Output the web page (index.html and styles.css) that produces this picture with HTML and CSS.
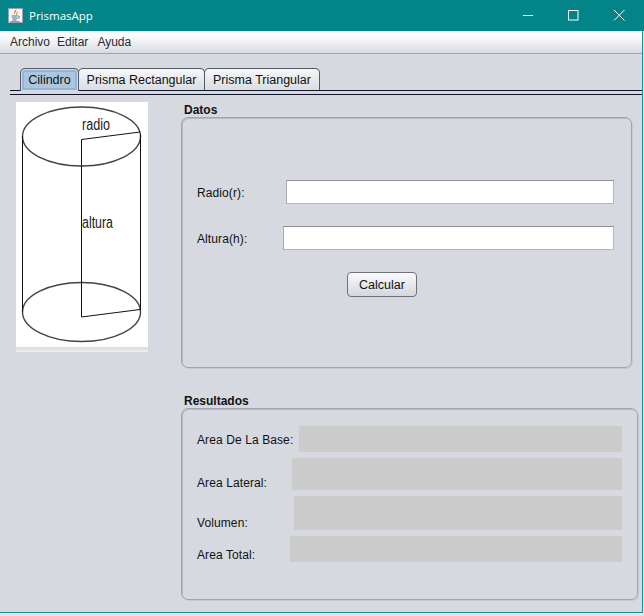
FILE: index.html
```html
<!doctype html>
<html>

<head>
    <meta charset="UTF-8">
    <title>PrismasApp</title>
    <link rel="stylesheet" href="styles.css">
</head>

<body>
    <div class="window">

        <div class="titlebar">
            <svg class="app-icon" width="15" height="15" viewBox="0 0 15 15">
                <rect x="0.5" y="0.5" width="14" height="14" fill="#f4f6f8" stroke="#9aa3ad"/>
                <path d="M8 1.5 C9.5 3.5 6 4.5 7 7 C5.5 5.5 6 3.5 8 1.5Z" fill="#e2711d"/>
                <path d="M10 4 C8.5 5 8 6 9 7.5" fill="none" stroke="#e2711d"/>
                <path d="M3.5 8 H9.5 M4 10 H9 M4.5 12 H8.5" stroke="#4a6f9c" fill="none"/>
                <path d="M10 8 C12 8 12 10 9.5 10.5" stroke="#4a6f9c" fill="none"/>
                <path d="M2.5 13.5 H11.5" stroke="#7f9ab8" fill="none"/>
            </svg>
            <span class="app-name">PrismasApp</span>
            <div class="win-btns">
                <svg class="win-btn" width="46" height="31" viewBox="0 0 46 31"><path d="M19 15.5 H29" stroke="#fff" fill="none"/></svg>
                <svg class="win-btn" width="46" height="31" viewBox="0 0 46 31"><rect x="18.5" y="10.5" width="9.5" height="9.5" stroke="#fff" fill="none"/></svg>
                <svg class="win-btn" width="46" height="31" viewBox="0 0 46 31"><path d="M18 10 L28.5 20.5 M28.5 10 L18 20.5" stroke="#fff" fill="none"/></svg>
            </div>
        </div>

        <div class="menubar">
            <span class="menu-archivo">Archivo</span>
            <span class="menu-editar">Editar</span>
            <span>Ayuda</span>
        </div>

        <div class="tabs">
            <div class="tab active">Cilindro</div>
            <div class="tab tab-rect">Prisma Rectangular</div>
            <div class="tab tab-tri">Prisma Triangular</div>
        </div>
        <div class="tab-line"></div>

        <div class="main">
            <div class="picture">
                <svg width="132" height="245" viewBox="16 102 132 245">
                    <rect x="16" y="102" width="132" height="245" fill="#fff"/>
                    <g fill="none" stroke="#444" stroke-width="1.4">
                        <ellipse cx="81.5" cy="136.5" rx="59" ry="29.5"/>
                        <ellipse cx="81.5" cy="312" rx="59" ry="29.5"/>
                    </g>
                    <path d="M22.5 136 V312 M140.5 134 V310 M81.5 317 V139.5 L140 132 M81.5 317 L140 309.5" fill="none" stroke="#111" stroke-width="1"/>
                    <text class="pic-text" x="82" y="130" textLength="28" lengthAdjust="spacingAndGlyphs">radio</text>
                    <text class="pic-text" x="82" y="228" textLength="31" lengthAdjust="spacingAndGlyphs">altura</text>
                </svg>
                <div class="picture-edge"></div>
            </div>

            <div class="forms">
                <div class="group-title">Datos</div>
                <div class="panel panel-datos">
                    <div class="row row-radio">
                        <label class="lbl">Radio(r):</label>
                        <input class="field field-radio" type="text">
                    </div>
                    <div class="row row-altura">
                        <label class="lbl">Altura(h):</label>
                        <input class="field field-altura" type="text">
                    </div>
                    <button class="btn">Calcular</button>
                </div>

                <div class="group-title title-res">Resultados</div>
                <div class="panel panel-res">
                    <div class="res res-base">
                        <label class="lbl">Area De La Base:</label>
                        <div class="out"></div>
                    </div>
                    <div class="res res-lateral">
                        <label class="lbl">Area Lateral:</label>
                        <div class="out"></div>
                    </div>
                    <div class="res res-vol">
                        <label class="lbl">Volumen:</label>
                        <div class="out"></div>
                    </div>
                    <div class="res res-total">
                        <label class="lbl">Area Total:</label>
                        <div class="out"></div>
                    </div>
                </div>
            </div>
        </div>

    </div>
</body>

</html>
```

FILE: styles.css
```css
* {
    margin: 0;
    padding: 0;
    box-sizing: border-box;
}

html, body {
    height: 100%;
}

body {
    background: #e4e7ea;
    font-family: "Liberation Sans", Arial, sans-serif;
    font-size: 12px;
    color: #111;
    overflow: hidden;
}

.window {
    height: 613px;
    width: 643px;
    border-right: 1px solid #1a9296;
    border-bottom: 1px solid #1a9296;
    background: #d6d9e0;
}

.titlebar {
    height: 31px;
    width: 644px;
    background: #028488;
    display: flex;
    align-items: center;
    padding-left: 8px;
    color: #fff;
}

.app-icon {
    flex: none;
}

.app-name {
    margin-left: 6px;
    font-family: "Open Sans", sans-serif;
    font-size: 11.5px;
}

.win-btns {
    margin-left: auto;
    display: flex;
    margin-right: 2px;
}

.win-btn {
    display: block;
}

.menubar {
    height: 23px;
    background: linear-gradient(#ffffff, #f6f7f8 35%, #d8dbe1);
    border-bottom: 1px solid #a3a6ad;
    display: flex;
    align-items: center;
    gap: 8px;
    padding-left: 10px;
    color: #2a2a33;
}

.menu-archivo {
    margin-right: -1px;
}

.menu-editar {
    margin-right: 1px;
}

.tabs {
    display: flex;
    align-items: flex-start;
    margin: 14px 0 0 20px;
    height: 22px;
}

.tab {
    height: 22px;
    border: 1px solid #555a63;
    border-bottom: 0;
    border-radius: 5px 5px 0 0;
    background: linear-gradient(#f6f7f9, #d9dce2);
    line-height: 22px;
    text-align: center;
    font-size: 12.5px;
    margin-right: -1px;
}

.tab.active {
    position: relative;
    width: 59px;
    height: 23px;
    background: #aec6dd;
    box-shadow: inset 0 0 0 1px #d5dbe3, inset 0 0 0 3px #93b6d6;
}

.tab-rect {
    width: 127px;
}

.tab-tri {
    width: 116px;
}

.tab-line {
    height: 5px;
    margin-left: 10px;
    border-top: 1px solid #10152a;
    border-bottom: 1px solid #10152a;
}

.main {
    display: flex;
    padding: 7px 0 0 16px;
}

.picture {
    width: 132px;
    flex: none;
}

.picture svg {
    display: block;
}

.picture-edge {
    height: 5px;
    background: linear-gradient(#dcdfe4, #dfe1e6 50%, #f3f4f6);
}

.pic-text {
    font-family: "Liberation Sans", Arial, sans-serif;
    font-size: 16px;
    fill: #222;
}

.forms {
    margin-left: 33px;
}

.group-title {
    font-weight: bold;
    height: 15px;
    line-height: 17px;
    margin-left: 3px;
}

.title-res {
    margin-top: 25px;
}

.panel {
    border: 1px solid #a2a5ac;
    border-radius: 7px;
    box-shadow: inset 1px 1px 0 #b7bac1, 1px 1px 0 #c6c9cf;
}

.panel-datos {
    width: 451px;
    height: 251px;
    padding: 62px 0 0 15px;
}

.panel-res {
    width: 457px;
    height: 192px;
    padding: 17px 0 0 15px;
}

.lbl {
    letter-spacing: 0.1px;
}

.row .lbl, .res-base .lbl {
    padding-top: 2px;
}

.row {
    display: flex;
    align-items: center;
    height: 24px;
}

.row-altura {
    margin-top: 22px;
}

.field {
    height: 24px;
    border: 1px solid #b5b7bc;
    border-top-color: #8f9196;
    border-left-color: #a9abb0;
    background: #fff;
    outline: 0;
    display: block;
}

.field-radio {
    width: 328px;
    margin-left: 41px;
}

.field-altura {
    width: 331px;
    margin-left: 36px;
}

.btn {
    display: block;
    width: 70px;
    height: 25px;
    margin: 22px 0 0 150px;
    border: 1px solid #6d7076;
    border-radius: 4px;
    background: linear-gradient(#fbfbfc, #d3d6dc);
    font: inherit;
    font-size: 12.5px;
    color: #111;
}

.res {
    display: flex;
    width: 425px;
}

.out {
    background: #cccccc;
    margin-left: auto;
}

.res-base {
    height: 26px;
    align-items: center;
}

.res-base .out {
    width: 323px;
    height: 26px;
}

.res-lateral {
    margin-top: 6px;
    height: 32px;
    align-items: flex-end;
}

.res-lateral .out {
    width: 330px;
    height: 32px;
}

.res-vol {
    margin-top: 6px;
    height: 34px;
    align-items: flex-end;
}

.res-vol .out {
    width: 328px;
    height: 34px;
}

.res-total {
    margin-top: 6px;
    height: 26px;
    align-items: flex-end;
}

.res-total .out {
    width: 332px;
    height: 26px;
}
```
